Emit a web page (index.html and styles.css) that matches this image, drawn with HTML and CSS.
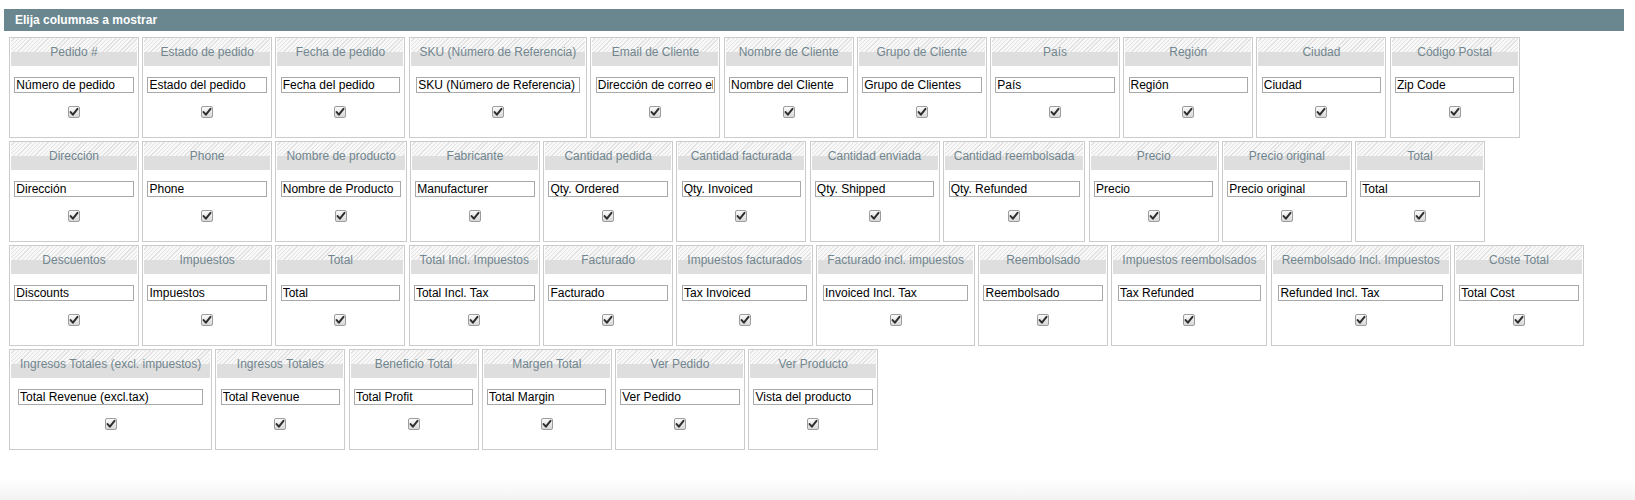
FILE: index.html
```html
<!DOCTYPE html>
<html lang="es">
<head>
<meta charset="utf-8">
<title>Elija columnas a mostrar</title>
<link rel="stylesheet" href="styles.css">
</head>
<body>
<div class="panel">
  <div class="panel-head"><h4>Elija columnas a mostrar</h4></div>
  <div class="cols">
    <div class="col"><div class="col-head">Pedido #</div><div class="col-body"><input class="col-label" type="text" value="Número de pedido"><label class="chk"><input type="checkbox" checked><svg viewBox="0 0 12 12"><path d="M2.6 6.1 L4.9 8.7 L9.5 2.9"/></svg></label></div></div>
    <div class="col"><div class="col-head">Estado de pedido</div><div class="col-body"><input class="col-label" type="text" value="Estado del pedido"><label class="chk"><input type="checkbox" checked><svg viewBox="0 0 12 12"><path d="M2.6 6.1 L4.9 8.7 L9.5 2.9"/></svg></label></div></div>
    <div class="col"><div class="col-head">Fecha de pedido</div><div class="col-body"><input class="col-label" type="text" value="Fecha del pedido"><label class="chk"><input type="checkbox" checked><svg viewBox="0 0 12 12"><path d="M2.6 6.1 L4.9 8.7 L9.5 2.9"/></svg></label></div></div>
    <div class="col"><div class="col-head">SKU (Número de Referencia)</div><div class="col-body"><input class="col-label" type="text" value="SKU (Número de Referencia)"><label class="chk"><input type="checkbox" checked><svg viewBox="0 0 12 12"><path d="M2.6 6.1 L4.9 8.7 L9.5 2.9"/></svg></label></div></div>
    <div class="col"><div class="col-head">Email de Cliente</div><div class="col-body"><input class="col-label" type="text" value="Dirección de correo electrónico"><label class="chk"><input type="checkbox" checked><svg viewBox="0 0 12 12"><path d="M2.6 6.1 L4.9 8.7 L9.5 2.9"/></svg></label></div></div>
    <div class="col"><div class="col-head">Nombre de Cliente</div><div class="col-body"><input class="col-label" type="text" value="Nombre del Cliente"><label class="chk"><input type="checkbox" checked><svg viewBox="0 0 12 12"><path d="M2.6 6.1 L4.9 8.7 L9.5 2.9"/></svg></label></div></div>
    <div class="col"><div class="col-head">Grupo de Cliente</div><div class="col-body"><input class="col-label" type="text" value="Grupo de Clientes"><label class="chk"><input type="checkbox" checked><svg viewBox="0 0 12 12"><path d="M2.6 6.1 L4.9 8.7 L9.5 2.9"/></svg></label></div></div>
    <div class="col"><div class="col-head">País</div><div class="col-body"><input class="col-label" type="text" value="País"><label class="chk"><input type="checkbox" checked><svg viewBox="0 0 12 12"><path d="M2.6 6.1 L4.9 8.7 L9.5 2.9"/></svg></label></div></div>
    <div class="col"><div class="col-head">Región</div><div class="col-body"><input class="col-label" type="text" value="Región"><label class="chk"><input type="checkbox" checked><svg viewBox="0 0 12 12"><path d="M2.6 6.1 L4.9 8.7 L9.5 2.9"/></svg></label></div></div>
    <div class="col"><div class="col-head">Ciudad</div><div class="col-body"><input class="col-label" type="text" value="Ciudad"><label class="chk"><input type="checkbox" checked><svg viewBox="0 0 12 12"><path d="M2.6 6.1 L4.9 8.7 L9.5 2.9"/></svg></label></div></div>
    <div class="col"><div class="col-head">Código Postal</div><div class="col-body"><input class="col-label" type="text" value="Zip Code"><label class="chk"><input type="checkbox" checked><svg viewBox="0 0 12 12"><path d="M2.6 6.1 L4.9 8.7 L9.5 2.9"/></svg></label></div></div>

    <div class="col"><div class="col-head">Dirección</div><div class="col-body"><input class="col-label" type="text" value="Dirección"><label class="chk"><input type="checkbox" checked><svg viewBox="0 0 12 12"><path d="M2.6 6.1 L4.9 8.7 L9.5 2.9"/></svg></label></div></div>
    <div class="col"><div class="col-head">Phone</div><div class="col-body"><input class="col-label" type="text" value="Phone"><label class="chk"><input type="checkbox" checked><svg viewBox="0 0 12 12"><path d="M2.6 6.1 L4.9 8.7 L9.5 2.9"/></svg></label></div></div>
    <div class="col"><div class="col-head">Nombre de producto</div><div class="col-body"><input class="col-label" type="text" value="Nombre de Producto"><label class="chk"><input type="checkbox" checked><svg viewBox="0 0 12 12"><path d="M2.6 6.1 L4.9 8.7 L9.5 2.9"/></svg></label></div></div>
    <div class="col"><div class="col-head">Fabricante</div><div class="col-body"><input class="col-label" type="text" value="Manufacturer"><label class="chk"><input type="checkbox" checked><svg viewBox="0 0 12 12"><path d="M2.6 6.1 L4.9 8.7 L9.5 2.9"/></svg></label></div></div>
    <div class="col"><div class="col-head">Cantidad pedida</div><div class="col-body"><input class="col-label" type="text" value="Qty. Ordered"><label class="chk"><input type="checkbox" checked><svg viewBox="0 0 12 12"><path d="M2.6 6.1 L4.9 8.7 L9.5 2.9"/></svg></label></div></div>
    <div class="col"><div class="col-head">Cantidad facturada</div><div class="col-body"><input class="col-label" type="text" value="Qty. Invoiced"><label class="chk"><input type="checkbox" checked><svg viewBox="0 0 12 12"><path d="M2.6 6.1 L4.9 8.7 L9.5 2.9"/></svg></label></div></div>
    <div class="col"><div class="col-head">Cantidad enviada</div><div class="col-body"><input class="col-label" type="text" value="Qty. Shipped"><label class="chk"><input type="checkbox" checked><svg viewBox="0 0 12 12"><path d="M2.6 6.1 L4.9 8.7 L9.5 2.9"/></svg></label></div></div>
    <div class="col"><div class="col-head">Cantidad reembolsada</div><div class="col-body"><input class="col-label" type="text" value="Qty. Refunded"><label class="chk"><input type="checkbox" checked><svg viewBox="0 0 12 12"><path d="M2.6 6.1 L4.9 8.7 L9.5 2.9"/></svg></label></div></div>
    <div class="col"><div class="col-head">Precio</div><div class="col-body"><input class="col-label" type="text" value="Precio"><label class="chk"><input type="checkbox" checked><svg viewBox="0 0 12 12"><path d="M2.6 6.1 L4.9 8.7 L9.5 2.9"/></svg></label></div></div>
    <div class="col"><div class="col-head">Precio original</div><div class="col-body"><input class="col-label" type="text" value="Precio original"><label class="chk"><input type="checkbox" checked><svg viewBox="0 0 12 12"><path d="M2.6 6.1 L4.9 8.7 L9.5 2.9"/></svg></label></div></div>
    <div class="col"><div class="col-head">Total</div><div class="col-body"><input class="col-label" type="text" value="Total"><label class="chk"><input type="checkbox" checked><svg viewBox="0 0 12 12"><path d="M2.6 6.1 L4.9 8.7 L9.5 2.9"/></svg></label></div></div>

    <div class="col"><div class="col-head">Descuentos</div><div class="col-body"><input class="col-label" type="text" value="Discounts"><label class="chk"><input type="checkbox" checked><svg viewBox="0 0 12 12"><path d="M2.6 6.1 L4.9 8.7 L9.5 2.9"/></svg></label></div></div>
    <div class="col"><div class="col-head">Impuestos</div><div class="col-body"><input class="col-label" type="text" value="Impuestos"><label class="chk"><input type="checkbox" checked><svg viewBox="0 0 12 12"><path d="M2.6 6.1 L4.9 8.7 L9.5 2.9"/></svg></label></div></div>
    <div class="col"><div class="col-head">Total</div><div class="col-body"><input class="col-label" type="text" value="Total"><label class="chk"><input type="checkbox" checked><svg viewBox="0 0 12 12"><path d="M2.6 6.1 L4.9 8.7 L9.5 2.9"/></svg></label></div></div>
    <div class="col"><div class="col-head">Total Incl. Impuestos</div><div class="col-body"><input class="col-label" type="text" value="Total Incl. Tax"><label class="chk"><input type="checkbox" checked><svg viewBox="0 0 12 12"><path d="M2.6 6.1 L4.9 8.7 L9.5 2.9"/></svg></label></div></div>
    <div class="col"><div class="col-head">Facturado</div><div class="col-body"><input class="col-label" type="text" value="Facturado"><label class="chk"><input type="checkbox" checked><svg viewBox="0 0 12 12"><path d="M2.6 6.1 L4.9 8.7 L9.5 2.9"/></svg></label></div></div>
    <div class="col"><div class="col-head">Impuestos facturados</div><div class="col-body"><input class="col-label" type="text" value="Tax Invoiced"><label class="chk"><input type="checkbox" checked><svg viewBox="0 0 12 12"><path d="M2.6 6.1 L4.9 8.7 L9.5 2.9"/></svg></label></div></div>
    <div class="col"><div class="col-head">Facturado incl. impuestos</div><div class="col-body"><input class="col-label" type="text" value="Invoiced Incl. Tax"><label class="chk"><input type="checkbox" checked><svg viewBox="0 0 12 12"><path d="M2.6 6.1 L4.9 8.7 L9.5 2.9"/></svg></label></div></div>
    <div class="col"><div class="col-head">Reembolsado</div><div class="col-body"><input class="col-label" type="text" value="Reembolsado"><label class="chk"><input type="checkbox" checked><svg viewBox="0 0 12 12"><path d="M2.6 6.1 L4.9 8.7 L9.5 2.9"/></svg></label></div></div>
    <div class="col"><div class="col-head">Impuestos reembolsados</div><div class="col-body"><input class="col-label" type="text" value="Tax Refunded"><label class="chk"><input type="checkbox" checked><svg viewBox="0 0 12 12"><path d="M2.6 6.1 L4.9 8.7 L9.5 2.9"/></svg></label></div></div>
    <div class="col"><div class="col-head">Reembolsado Incl. Impuestos</div><div class="col-body"><input class="col-label" type="text" value="Refunded Incl. Tax"><label class="chk"><input type="checkbox" checked><svg viewBox="0 0 12 12"><path d="M2.6 6.1 L4.9 8.7 L9.5 2.9"/></svg></label></div></div>
    <div class="col"><div class="col-head">Coste Total</div><div class="col-body"><input class="col-label" type="text" value="Total Cost"><label class="chk"><input type="checkbox" checked><svg viewBox="0 0 12 12"><path d="M2.6 6.1 L4.9 8.7 L9.5 2.9"/></svg></label></div></div>

    <div class="col"><div class="col-head">Ingresos Totales (excl. impuestos)</div><div class="col-body"><input class="col-label" type="text" value="Total Revenue (excl.tax)"><label class="chk"><input type="checkbox" checked><svg viewBox="0 0 12 12"><path d="M2.6 6.1 L4.9 8.7 L9.5 2.9"/></svg></label></div></div>
    <div class="col"><div class="col-head">Ingresos Totales</div><div class="col-body"><input class="col-label" type="text" value="Total Revenue"><label class="chk"><input type="checkbox" checked><svg viewBox="0 0 12 12"><path d="M2.6 6.1 L4.9 8.7 L9.5 2.9"/></svg></label></div></div>
    <div class="col"><div class="col-head">Beneficio Total</div><div class="col-body"><input class="col-label" type="text" value="Total Profit"><label class="chk"><input type="checkbox" checked><svg viewBox="0 0 12 12"><path d="M2.6 6.1 L4.9 8.7 L9.5 2.9"/></svg></label></div></div>
    <div class="col"><div class="col-head">Margen Total</div><div class="col-body"><input class="col-label" type="text" value="Total Margin"><label class="chk"><input type="checkbox" checked><svg viewBox="0 0 12 12"><path d="M2.6 6.1 L4.9 8.7 L9.5 2.9"/></svg></label></div></div>
    <div class="col"><div class="col-head">Ver Pedido</div><div class="col-body"><input class="col-label" type="text" value="Ver Pedido"><label class="chk"><input type="checkbox" checked><svg viewBox="0 0 12 12"><path d="M2.6 6.1 L4.9 8.7 L9.5 2.9"/></svg></label></div></div>
    <div class="col"><div class="col-head">Ver Producto</div><div class="col-body"><input class="col-label" type="text" value="Vista del producto"><label class="chk"><input type="checkbox" checked><svg viewBox="0 0 12 12"><path d="M2.6 6.1 L4.9 8.7 L9.5 2.9"/></svg></label></div></div>
  </div>
</div>
<div class="page-foot"></div>
</body>
</html>
```
FILE: styles.css
```css
html, body {
  margin: 0;
  padding: 0;
  background: #fff;
}

body {
  font-family: "Liberation Sans", Arial, sans-serif;
  font-size: 12px;
  color: #000;
  overflow: hidden;
}

.panel {
  margin: 9px 11px 0 4px;
}

.panel-head {
  background: #6a8790;
  height: 22px;
  padding: 0 10px 0 11px;
  display: flex;
  align-items: center;
}

.panel-head h4 {
  margin: 0;
  color: #fff;
  font-size: 12px;
  font-weight: bold;
  line-height: 14px;
}

.cols {
  display: flex;
  flex-wrap: wrap;
  align-items: flex-start;
  gap: 3px 3.2px;
  margin: 6px 16px 0 5px;
}

.col {
  box-sizing: border-box;
  min-width: 130px;
  border: 1px solid #cbcbcb;
  padding: 0 1px;
  background: #fff;
}

.col-head {
  height: 28px;
  line-height: 28px;
  padding: 0 9px;
  text-align: center;
  white-space: nowrap;
  color: #72868f;
  background:
    linear-gradient(to bottom, transparent 0, transparent 14px, #dedede 14px, #dedede 100%),
    repeating-linear-gradient(135deg, #f8f8f8 0, #f8f8f8 2px, #e2e2e2 2px, #e2e2e2 3px);
}

.col-body {
  contain: inline-size;
  display: flex;
  flex-direction: column;
  align-items: center;
  padding: 11px 0 19px;
}

.col-label {
  box-sizing: border-box;
  width: calc(90% + 6px);
  min-width: 0;
  height: 16px;
  margin: 0;
  padding: 0 1px;
  border: 1px solid #a9a9a9;
  border-radius: 0;
  background: #fff;
  font-family: "Liberation Sans", Arial, sans-serif;
  font-size: 12px;
  line-height: 14px;
  color: #000;
  outline: none;
}

.chk {
  position: relative;
  display: block;
  width: 12px;
  height: 12px;
  margin-top: 13px;
}

.chk input {
  -webkit-appearance: none;
  appearance: none;
  display: block;
  box-sizing: border-box;
  width: 12px;
  height: 12px;
  margin: 0;
  border: 1px solid #9d9d9d;
  border-radius: 2px;
  background: linear-gradient(#fbfbfb, #d8d8d8);
}

.chk svg {
  position: absolute;
  left: 0;
  top: 0;
  width: 12px;
  height: 12px;
  pointer-events: none;
}

.chk svg path {
  fill: none;
  stroke: #2e2e2e;
  stroke-width: 2;
  stroke-linecap: round;
  stroke-linejoin: round;
}

.page-foot {
  margin-top: 28px;
  height: 22px;
  background: linear-gradient(#ffffff, #f3f3f3);
}
```
